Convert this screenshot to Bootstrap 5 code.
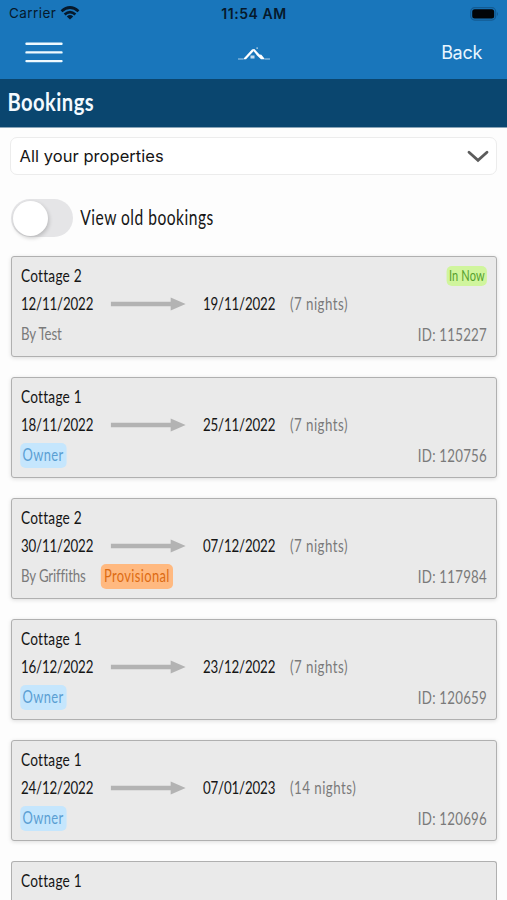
<!DOCTYPE html>
<html lang="en">
<head>
<meta charset="utf-8">
<meta name="viewport" content="width=device-width, initial-scale=1">
<title>Bookings</title>
<link href="https://cdn.jsdelivr.net/npm/bootstrap@5.3.0/dist/css/bootstrap.min.css" rel="stylesheet">
<style>
body{width:507px;height:900px;overflow:hidden;background:#fdfdfd;font-family:Inter,"Liberation Sans",sans-serif;color:#151515}
.top-area{background:#1976bb;height:79px}
.status-line{height:27px;padding:0 8px 0 9px;color:#06192b;font-size:13.5px;display:grid;grid-template-columns:1fr auto 1fr}
.carrier{letter-spacing:.45px}
.status-time{font-weight:600;font-size:14px;letter-spacing:.55px}
.app-nav{height:52px;padding:0 25px;display:grid;grid-template-columns:1fr auto 1fr}
.app-nav>.text-end{margin-top:-2px}
.back-link{font-size:18px;letter-spacing:-.3px;color:#e9f6ff;text-decoration:none}
.title-strip{height:49px;background:#0a466f;border-bottom:1px solid #8aa5b8;color:#f3faff}
/* condensed lettering: the box is widened, then squeezed back */
.cond{--s:.76;font-family:Lato,sans-serif;transform:scaleX(var(--s));transform-origin:0 50%;width:calc(100% / var(--s));white-space:nowrap}
.title-strip .cond{--s:.84;font-weight:700;font-size:24px;letter-spacing:.5px;padding:0 0 2px 9px}
.picker{height:38px;margin:9px 10px 0;border:1px solid #ececec;border-radius:7px;padding:0 7px 0 8.5px;background:#fff;font-size:16.5px;letter-spacing:.05px}
.toggle-row{height:40px;margin:23px 11px 0}
.toggle{width:62px;height:38px;border-radius:19px;background:#e5e5e7;padding:1.5px}
.knob{width:35px;height:35px;border-radius:50%;background:#fff;box-shadow:1px 2px 4px rgba(0,0,0,.2)}
.toggle-label{font-size:20.5px;letter-spacing:.65px;padding:0 0 2px 9.5px}
.bookings{padding:18px 10px 0 11px;gap:20px}
.booking{height:101px;flex:none;background:#eaeaea;border:1px solid #b0b0b0;border-radius:3px;box-shadow:0 1px 4px rgba(0,0,0,.13);padding:5px 9px}
.booking-peek{height:39px;border-bottom:0;border-radius:3px 3px 0 0;box-shadow:none}
.booking .cond{font-size:17.5px;line-height:28px}
.cottage{font-size:18px;letter-spacing:.3px;line-height:26px;display:block;height:28px}
.trip{display:grid;grid-template-columns:calc(90px / var(--s)) calc(92px / var(--s)) calc(87px / var(--s)) auto;height:28px;letter-spacing:-.2px}
.trip .muted-text{letter-spacing:.62px}
.foot-row{height:32px}
.guest{letter-spacing:-.2px}
.ref-id{letter-spacing:.3px;padding-top:1px}
.muted-text{color:#7a7a7a}
.tag{font-size:17px;line-height:24px;height:25px;padding:0 4px;border-radius:7px/5px;letter-spacing:.5px}
.tag-owner{background:#c5e6fd;color:#5b9fd3;padding:0 4px 0 3px;margin-left:-1px}
.tag-prov{background:#ffb980;color:#dd6b12;margin-left:20px}
.tag-now{background:#d0f59d;color:#55a02e;font-size:14.5px;letter-spacing:.15px;line-height:20px;height:20px;padding:0 3px}
</style>
</head>
<body>
<header class="top-area">
  <div class="status-line align-items-center">
    <div class="d-flex align-items-center gap-1"><span class="carrier">Carrier</span>
      <svg width="20" height="15" viewBox="0 0 20 15" fill="none" stroke="#06192b" stroke-width="2.7"><path d="M1.5 5.2Q10-2.2 18.5 5.2M4.6 8.5Q10 3.9 15.4 8.5"/><path d="M10 13.6L6.8 10.4Q10 7.8 13.2 10.4Z" fill="#06192b" stroke="none"/></svg>
    </div>
    <div class="status-time">11:54 AM</div>
    <div class="d-flex justify-content-end"><svg width="29" height="14" viewBox="0 0 29 14"><rect x=".7" y=".7" width="25" height="12.4" rx="4" fill="none" stroke="#135b93" stroke-width="1.2"/><rect x="2.2" y="2.2" width="22" height="9.4" rx="2.5" fill="#020508"/><path d="M27 5q2 2 0 4z" fill="#135b93"/></svg></div>
  </div>
  <nav class="app-nav align-items-center">
    <div><svg class="d-block" width="38" height="22" viewBox="0 0 38 22" stroke="#effaff" stroke-width="2.4" stroke-linecap="round"><path d="M1.5 1.7H36.5M1.5 10.4H36.5M1.5 19.1H36.5"/></svg></div>
    <svg width="34" height="16" viewBox="0 0 34 16" fill="#fff"><path d="M6 14.2L15.2 4.2 17 5.8 9 14.2Z"/><path d="M15.2 4.2L17.4 4 22.5 9.4 24.4 9.7 28 14.2H24L20 10.6Z"/><path d="M13.5 10.6h4v3h-4zM19.4 2.5h1.5v1.3h-1.5z" opacity=".75"/><path d="M1 13.5h5v1H1zM28 13.5h5v1h-5z" opacity=".65"/></svg>
    <div class="text-end"><a class="back-link" href="#">Back</a></div>
  </nav>
</header>
<div class="title-strip d-flex align-items-center"><h1 class="cond m-0">Bookings</h1></div>
<main>
  <div class="picker d-flex align-items-center justify-content-between"><span>All your properties</span>
    <svg width="22" height="13" viewBox="0 0 22 13" fill="none" stroke="#5c5c5c" stroke-width="2.8" stroke-linecap="round"><path d="M2 2.2L11 10.3 20 2.2"/></svg></div>
  <div class="toggle-row d-flex align-items-center"><div class="toggle flex-shrink-0"><div class="knob"></div></div><div class="flex-grow-1"><div class="cond toggle-label">View old bookings</div></div></div>
  <section class="bookings d-flex flex-column" id="bookings"></section>
</main>
<script>
const bookings=[
 ["Cottage 2","12/11/2022","19/11/2022",7,"By Test","","115227","In Now"],
 ["Cottage 1","18/11/2022","25/11/2022",7,"","Owner","120756",""],
 ["Cottage 2","30/11/2022","07/12/2022",7,"By Griffiths","Provisional","117984",""],
 ["Cottage 1","16/12/2022","23/12/2022",7,"","Owner","120659",""],
 ["Cottage 1","24/12/2022","07/01/2023",14,"","Owner","120696",""]
];
document.getElementById("bookings").innerHTML=bookings.map(([name,from,to,n,by,tag,id,now])=>`
<article class="booking"><div class="cond">
 <div class="d-flex justify-content-between align-items-center"><span class="cottage">${name}</span>${now?`<span class="tag tag-now">${now}</span>`:""}</div>
 <div class="trip"><span>${from}</span>
  <svg class="align-self-center" style="width:calc(75px / var(--s))" height="14" viewBox="0 0 75 14" preserveAspectRatio="none" fill="#b3b3b3"><path d="M0 4.7H60V.5L75 7 60 13.5V9.3H0Z"/></svg>
  <span>${to}</span><span class="muted-text">(${n} nights)</span></div>
 <div class="foot-row d-flex align-items-center muted-text">${by?`<span class="guest">${by}</span>`:""}${tag?`<span class="tag ${tag=="Owner"?"tag-owner":"tag-prov"}">${tag}</span>`:""}<span class="ref-id ms-auto">ID: ${id}</span></div>
</div></article>`).join("")+`<article class="booking booking-peek"><div class="cond"><span class="cottage">Cottage 1</span></div></article>`;
</script>
<script src="https://cdn.jsdelivr.net/npm/bootstrap@5.3.0/dist/js/bootstrap.bundle.min.js"></script>
</body>
</html>
